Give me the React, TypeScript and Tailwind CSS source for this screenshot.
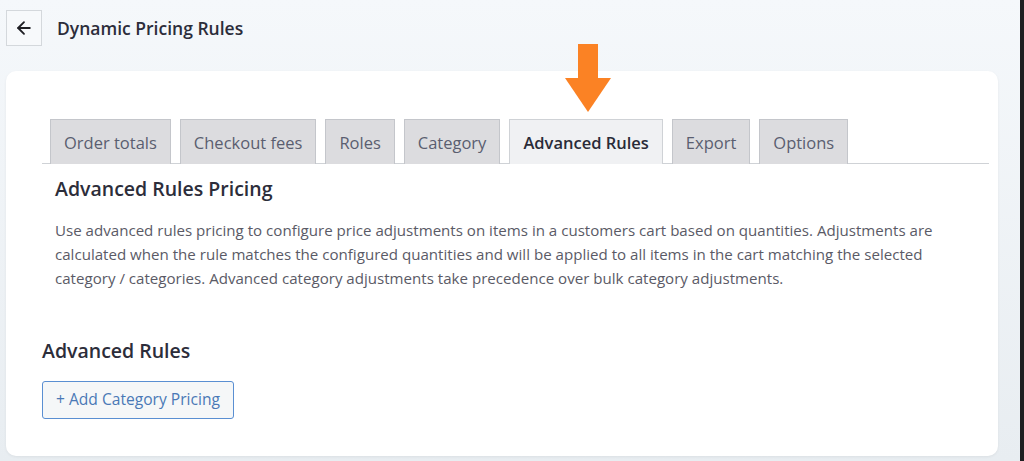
import { ArrowLeft } from 'lucide-react';

const tabs = ['Order totals', 'Checkout fees', 'Roles', 'Category', 'Advanced Rules', 'Export', 'Options'];

export default function App() {
  const active = 'Advanced Rules';

  return (
    <div className="flex h-[461px] w-full overflow-hidden bg-gradient-to-b from-[#f5f8fb] to-[#e8edf1] font-['Open_Sans',sans-serif]">
      <div className="flex flex-1 flex-col">
        {/* Header */}
        <div className="flex items-center pl-[6px] pt-[10px]">
          <button className="flex h-[36px] w-[36px] items-center justify-center border border-[#d4d8dc] bg-[#f7f9fb] text-[#1f1f24]">
            <ArrowLeft size={20} strokeWidth={2.2} />
          </button>
          <h1 className="ml-[15px] text-[17.5px] font-semibold text-[#2c2d3a]">Dynamic Pricing Rules</h1>
        </div>

        {/* Card */}
        <div className="relative ml-[6px] mt-[25px] h-[385px] w-[992px] rounded-[10px] bg-white pl-[36px] pr-[9px] pt-[48px] shadow-[0_1px_3px_rgba(0,0,0,0.06)]">
          {/* Pointer arrow */}
          <svg className="absolute left-[559px] top-[-27px]" width="46" height="70" viewBox="0 0 46 70">
            <rect x="13" y="0" width="20" height="36" fill="#fb8224" />
            <polygon points="0,34 46,34 23,68" fill="#fb8224" />
          </svg>

          {/* Tabs */}
          <div className="flex gap-[9px] border-b border-[#cfd2d6] pl-[8px]">
            {tabs.map((t) => {
              const isActive = t === active;
              return (
                <div
                  key={t}
                  className={`-mb-px flex h-[45px] items-center border border-b-0 px-[13px] pt-[2px] text-[16.5px] ${
                    isActive
                      ? 'border-[#cfd2d6] bg-[#f0f1f3] font-semibold text-[#2a2b38]'
                      : 'border-[#c4c6cb] border-b bg-[#dcdcdf] text-[#5a5e70]'
                  }`}
                >
                  {t}
                </div>
              );
            })}
          </div>

          {/* Intro */}
          <div className="pl-[13px]">
            <h2 className="mt-[10px] text-[19.5px] font-semibold text-[#2c2d3a]">Advanced Rules Pricing</h2>
            <p className="mt-[15px] w-[900px] text-[15.1px] leading-[24px] text-[#5a5a66]">
              Use advanced rules pricing to configure price adjustments on items in a customers cart based on quantities. Adjustments are calculated when the rule matches the configured quantities and will be applied to all items in the cart matching the selected category / categories. Advanced category adjustments take precedence over bulk category adjustments.
            </p>
          </div>

          {/* Rules */}
          <h3 className="mt-[46px] text-[19.5px] font-semibold text-[#2c2d3a]">Advanced Rules</h3>
          <button className="mt-[15px] flex h-[38px] w-[192px] items-center justify-center rounded-[3px] border border-[#5a8fd2] bg-[#f5f7f8] text-[15.6px] text-[#4a79b6]">
            + Add Category Pricing
          </button>
        </div>
      </div>
      <div className="w-[4px] bg-[#1e1f21]" />
    </div>
  );
}
